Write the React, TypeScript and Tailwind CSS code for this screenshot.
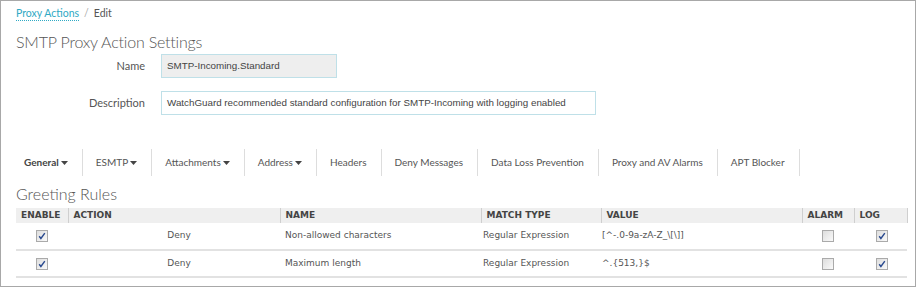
import React from 'react'

const tabs = [
  { label: 'General', menu: true, active: true },
  { label: 'ESMTP', menu: true },
  { label: 'Attachments', menu: true },
  { label: 'Address', menu: true },
  { label: 'Headers' },
  { label: 'Deny Messages' },
  { label: 'Data Loss Prevention' },
  { label: 'Proxy and AV Alarms' },
  { label: 'APT Blocker' },
]

const rules = [
  { action: 'Deny', name: 'Non-allowed characters', type: 'Regular Expression', value: '[^-.0-9a-zA-Z_\\[\\]]' },
  { action: 'Deny', name: 'Maximum length', type: 'Regular Expression', value: '^.{513,}$' },
]

function Caret() {
  return (
    <svg width="7" height="4" viewBox="0 0 7 4" className="ml-[2px] mt-[1px]">
      <path d="M0 0h7L3.5 4z" fill="#444" />
    </svg>
  )
}

function Box({ checked }: { checked?: boolean }) {
  return (
    <svg width="12" height="12" viewBox="0 0 12 12">
      <defs>
        <linearGradient id="cb" x1="0" y1="0" x2="1" y2="1">
          <stop offset="0" stopColor="#dcdcdc" />
          <stop offset="1" stopColor="#fbfbfb" />
        </linearGradient>
      </defs>
      <rect x="0.5" y="0.5" width="11" height="11" fill="url(#cb)" stroke="#aaaaaa" />
      {checked && <path d="M3.2 6.3l1.7 2.2L8.8 3.2" fill="none" stroke="#2a4a8f" strokeWidth="1.4" />}
    </svg>
  )
}

export default function App() {
  return (
    <div className="w-[916px] h-[287px] border border-[#a8a8a8] bg-white pl-[15px] pr-[8px] overflow-hidden font-['Lato',sans-serif]">
      <div className="flex items-center h-[24px] text-[10.5px] pt-[1px]">
        <span className="text-[#2fa9c4] border-b border-dotted border-[#2fa9c4] leading-[13px]">Proxy Actions</span>
        <span className="text-[#aaa] mx-[5px]">/</span>
        <span className="text-[#555]">Edit</span>
      </div>
      <h1 className="text-[16px] font-light text-[#555] leading-[22px] mt-[6px] tracking-[-0.2px]">SMTP Proxy Action Settings</h1>

      <div className="flex items-center mt-[1px]">
        <label className="w-[129px] text-right text-[11px] text-[#555]">Name</label>
        <div className="ml-[16px] w-[176px] h-[24px] border border-[#bfe0e8] bg-[#eeeeee] flex items-center px-[5px] text-[9.8px] text-[#444] font-['Liberation_Sans',sans-serif]">
          SMTP-Incoming.Standard
        </div>
      </div>
      <div className="flex items-center mt-[13px]">
        <label className="w-[129px] text-right text-[11px] text-[#555]">Description</label>
        <div className="ml-[16px] w-[435px] h-[24px] border border-[#bfe0e8] bg-white flex items-center px-[5px] text-[9.8px] text-[#444] font-['Liberation_Sans',sans-serif]">
          WatchGuard recommended standard configuration for SMTP-Incoming with logging enabled
        </div>
      </div>

      <div className="flex mt-[34px] h-[27px]">
        {tabs.map((t, i) => (
          <div key={t.label} className={`flex items-center ${i === 0 ? 'pl-[8px]' : 'pl-[13px]'} pr-[14px] border-r border-[#dddddd] text-[10px] text-[#555]`}>
            <span className={t.active ? 'font-bold text-[#444]' : ''}>{t.label}</span>
            {t.menu && <Caret />}
          </div>
        ))}
      </div>

      <div className="mt-[8px] text-[16px] font-light text-[#555] leading-[20px]">Greeting Rules</div>

      <table className="mt-[4px] w-[891px] border-collapse text-[9px] font-['DejaVu_Sans',sans-serif] table-fixed">
        <colgroup>
          <col className="w-[52px]" />
          <col className="w-[212px]" />
          <col className="w-[201px]" />
          <col className="w-[120px]" />
          <col className="w-[201px]" />
          <col className="w-[52px]" />
          <col className="w-[53px]" />
        </colgroup>
        <thead>
          <tr className="bg-[#efefef] h-[15px] text-[#444] font-bold text-left">
            {['ENABLE', 'ACTION', 'NAME', 'MATCH TYPE', 'VALUE', 'ALARM', 'LOG'].map((h) => (
              <th key={h} className="px-[5px] py-0 whitespace-nowrap overflow-hidden leading-[15px] border-r border-[#cfcfcf]">{h}</th>
            ))}
          </tr>
        </thead>
        <tbody className="text-[#555]">
          {rules.map((r) => (
            <tr key={r.name} className="h-[27px] border-b-2 border-[#e2e2e2]">
              <td><div className="flex justify-center"><Box checked /></div></td>
              <td className="text-center pl-[10px]">{r.action}</td>
              <td className="pl-[5px]">{r.name}</td>
              <td className="pl-[2px]">{r.type}</td>
              <td className="pl-[1px]">{r.value}</td>
              <td><div className="flex justify-center"><Box /></div></td>
              <td><div className="flex justify-center pl-[3px]"><Box checked /></div></td>
            </tr>
          ))}
        </tbody>
      </table>
    </div>
  )
}
